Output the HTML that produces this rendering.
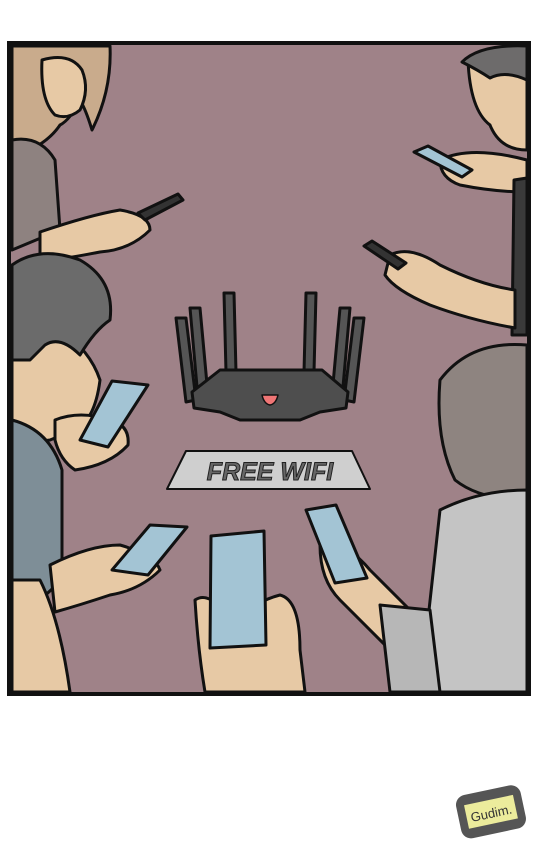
<!DOCTYPE html>
<html><head><meta charset="utf-8"><style>
html,body{margin:0;padding:0;background:#fff;width:540px;height:856px;overflow:hidden}
svg{display:block}
</style></head><body>
<svg width="540" height="856" viewBox="0 0 540 856" xmlns="http://www.w3.org/2000/svg">
<rect x="0" y="0" width="540" height="856" fill="#fff"/>
<rect x="10" y="44" width="518" height="649" fill="#9f8288"/>
<g stroke="#111" stroke-width="3" stroke-linejoin="round">
<!-- top-left woman -->
<path d="M12 46 L110 46 Q112 90 92 130 Q86 110 80 100 Q70 120 60 125 Q50 140 30 150 L12 160 Z" fill="#c9ab8c"/>
<path d="M42 60 Q70 52 82 70 Q90 90 80 110 Q68 120 55 115 Q40 100 42 60 Z" fill="#e7c9a5"/>
<path d="M12 140 Q40 135 55 160 L60 230 L12 250 Z" fill="#8e8280"/>
<path d="M40 232 Q90 215 120 210 Q150 215 150 230 Q130 250 100 252 Q70 258 40 262 Z" fill="#e7c9a5"/>
<path d="M138 213 L178 194 L183 200 L145 220 Z" fill="#333"/>
<!-- top-right man -->
<path d="M468 60 Q490 44 527 46 L527 150 Q500 150 490 125 Q470 110 468 60 Z" fill="#e7c9a5"/>
<path d="M462 62 Q480 44 527 46 L527 80 Q505 70 490 78 Q478 70 462 62 Z" fill="#6d6b6b"/>
<path d="M440 160 Q470 145 527 160 L527 192 Q495 192 460 185 Q440 178 440 160 Z" fill="#e7c9a5"/>
<path d="M414 152 L428 146 L472 170 L462 177 Z" fill="#a3c4d4"/>
<path d="M514 180 L527 178 L527 335 L512 335 Z" fill="#3a3a3a"/>
<!-- right middle arm -->
<path d="M390 255 Q410 245 440 265 Q480 285 515 290 L515 328 Q470 320 430 305 Q395 290 385 275 Z" fill="#e7c9a5"/>
<path d="M364 246 L372 241 L406 263 L398 269 Z" fill="#333"/>
<!-- left man -->
<path d="M12 330 Q30 300 60 330 Q90 350 100 380 Q95 420 75 430 L50 440 L12 445 Z" fill="#e7c9a5"/>
<path d="M12 265 Q40 245 80 260 Q115 280 110 320 Q95 330 80 355 Q60 335 45 345 L30 360 L12 360 Z" fill="#6b6b6b"/>
<path d="M12 420 Q50 430 62 470 L62 580 L40 600 L12 600 Z" fill="#7e8e97"/>
<path d="M55 420 Q80 410 110 420 Q130 425 128 445 Q110 465 75 470 Q60 460 55 440 Z" fill="#e7c9a5"/>
<path d="M80 440 L112 381 L148 385 L108 447 Z" fill="#a3c4d4"/>
<!-- bottom left arm -->
<path d="M50 565 Q90 545 120 545 Q155 555 160 570 Q140 590 110 595 Q80 605 55 612 Z" fill="#e7c9a5"/>
<path d="M112 570 L150 525 L187 527 L148 575 Z" fill="#a3c4d4"/>
<path d="M12 580 L40 580 Q60 620 70 692 L12 692 Z" fill="#e7c9a5"/>
<!-- bottom center -->
<path d="M195 600 Q210 590 230 620 Q260 600 280 595 Q300 600 300 650 L305 692 L205 692 Q198 650 195 600 Z" fill="#e7c9a5"/>
<path d="M211 536 L264 531 L266 645 L210 648 Z" fill="#a3c4d4"/>
<!-- bottom right person -->
<path d="M440 380 Q470 340 527 345 L527 500 Q480 500 455 480 Q435 440 440 380 Z" fill="#8e8480"/>
<path d="M440 510 Q480 490 527 490 L527 692 L420 692 Q430 600 440 510 Z" fill="#c4c4c4"/>
<path d="M320 545 Q345 540 370 570 Q400 600 420 620 L400 660 Q370 630 340 600 Q320 580 320 545 Z" fill="#e7c9a5"/>
<path d="M380 605 L430 610 L440 692 L390 692 Z" fill="#b7b7b7"/>
<path d="M306 510 L336 505 L367 578 L335 583 Z" fill="#a3c4d4"/>
<!-- router antennas -->
<path d="M176 318 L186 318 L196 400 L186 402 Z" fill="#555"/>
<path d="M190 308 L200 308 L208 395 L198 398 Z" fill="#555"/>
<path d="M224 293 L234 293 L236 372 L226 372 Z" fill="#555"/>
<path d="M306 293 L316 293 L314 372 L304 372 Z" fill="#555"/>
<path d="M340 308 L350 308 L342 398 L332 395 Z" fill="#555"/>
<path d="M354 318 L364 318 L354 402 L344 400 Z" fill="#555"/>
<path d="M220 370 L322 370 L348 392 L346 408 L320 412 L300 420 L240 420 L220 412 L194 408 L192 392 Z" fill="#4e4e4e"/>
<path d="M262 395 L278 395 Q276 404 270 405 Q264 404 262 395 Z" fill="#ef7575" stroke-width="1.5"/>
<!-- free wifi sign -->
<path d="M186 451 L352 451 L370 489 L167 489 Z" fill="#cfcfcf" stroke-width="2"/>
</g>
<text x="270" y="480" text-anchor="middle" font-family="Liberation Sans, sans-serif" font-style="italic" font-weight="bold" font-size="25" fill="#666" stroke="#222" stroke-width="1">FREE WIFI</text>
<rect x="9" y="43" width="520" height="651" fill="none" stroke="#111" stroke-width="4"/>
<!-- logo -->
<g transform="rotate(-12 490 812)">
<rect x="458" y="790" width="66" height="44" rx="10" fill="#555"/>
<rect x="466" y="800" width="50" height="24" fill="#ecec9c"/>
<text x="491" y="818" text-anchor="middle" font-family="Liberation Sans, sans-serif" font-size="13" fill="#333">Gudim.</text>
</g>
</svg>
</body></html>
